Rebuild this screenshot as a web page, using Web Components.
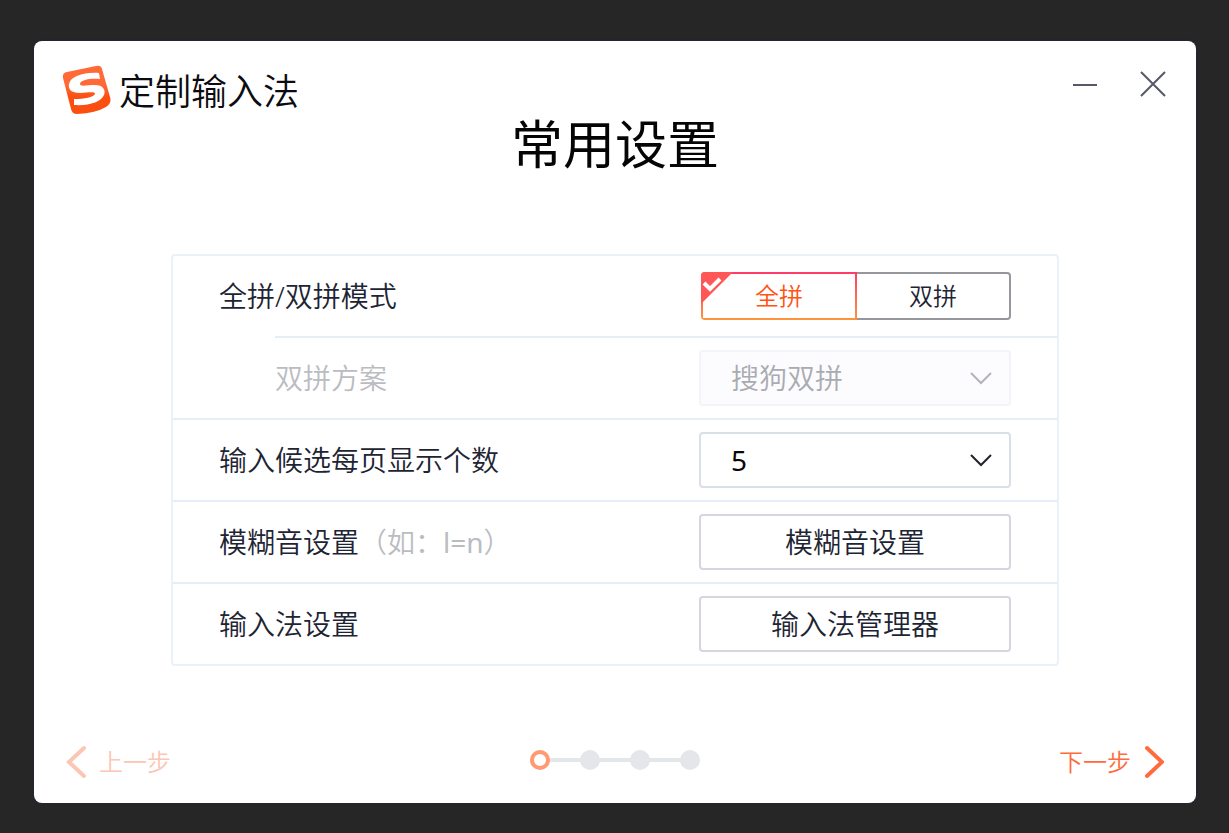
<!DOCTYPE html>
<html lang="zh-CN">
<head>
<meta charset="utf-8">
<meta name="viewport" content="width=device-width, initial-scale=1">
<title>定制输入法</title>
<style>
  * { box-sizing: border-box; }
  body {
    margin: 0;
    min-height: 100vh;
    display: flex;
    padding: 41px 33px 30px 34px;
    background: #262626;
    color: #1d2433;
    font-family: "Noto Sans", "Noto Sans CJK SC", sans-serif;
    font-weight: 350;
  }
</style>
</head>
<body>
<wizard-window>
  <title-bar slot="bar">定制输入法</title-bar>
  <span slot="heading">常用设置</span>
  <settings-panel></settings-panel>
  <step-nav slot="nav" total="4" current="1"></step-nav>
</wizard-window>

<script>
class BaseElement extends HTMLElement {
  connectedCallback() {
    if (this.shadowRoot) return;
    this.attachShadow({ mode: "open" }).innerHTML =
      "<style>*{box-sizing:border-box}button{font:inherit;color:inherit;background:none;border:0;padding:0;margin:0;cursor:pointer}svg{display:block}</style>" + this.render();
  }
}

customElements.define("wizard-window", class extends BaseElement {
  render() {
    return `
    <style>
      :host { flex: 1; display: flex; flex-direction: column; background: #fff; border-radius: 8px; box-shadow: 0 0 3px #1d2a40; }
      h1 { margin: 0; text-align: center; font-size: 52px; line-height: 62px; font-weight: 400; color: #050505; }
      main { flex: 1; width: 100%; max-width: 888px; margin: 0 auto; padding-top: 79px; }
    </style>
    <slot name="bar"></slot>
    <h1><slot name="heading"></slot></h1>
    <main><slot></slot></main>
    <slot name="nav"></slot>`;
  }
});

customElements.define("title-bar", class extends BaseElement {
  render() {
    return `
    <style>
      :host { display: flex; align-items: flex-start; justify-content: space-between; height: 72px; padding: 24px 26px 0 28px; }
      .brand { display: flex; align-items: flex-start; gap: 8px; font-size: 36px; line-height: 54px; color: #0c0c10; }
      .actions { display: flex; gap: 32px; }
      .actions button { width: 36px; height: 36px; }
    </style>
    <div class="brand">
      <svg width="49" height="50" viewBox="0 0 49 50" aria-hidden="true">
        <defs><linearGradient id="g" x1="0" y1="0" x2="0" y2="1"><stop offset=".4" stop-color="#ff6a36"/><stop offset=".65" stop-color="#fa4f10"/></linearGradient></defs>
        <path fill="url(#g)" d="M5 7 L34 1 Q39 0 40 4 L48 32 Q50 38 44 42 Q34 48 15 49 Q10 49 9 44 L1 13 Q0 8 5 7Z"/>
        <path fill="#fff" d="M37 8 L38 14 C28 13 18 15 18 19 C18 22 25 20 33 20 C41 20 44 25 42 30 C39 37 27 41 12 40 L12 34 C22 34 32 32 33 29 C33 26 25 28 18 28 C9 28 6 24 7 19 C9 11 22 7 37 8Z"/>
      </svg>
      <span><slot></slot></span>
    </div>
    <div class="actions">
      <button type="button" aria-label="最小化"><svg width="36" height="36" aria-hidden="true"><path d="M7 20H31" stroke="#555865" stroke-width="2"/></svg></button>
      <button type="button" aria-label="关闭"><svg width="36" height="36" aria-hidden="true"><path d="M7 7L31 31M31 7L7 31" stroke="#555865" stroke-width="2"/></svg></button>
    </div>`;
  }
});

customElements.define("setting-row", class extends BaseElement {
  render() {
    return `
    <style>
      :host { display: flex; align-items: center; justify-content: space-between; height: 82px; padding: 0 46px; border-top: 2px solid #e6edf6; }
      :host([first]) { height: 80px; border-top: 0; }
      :host([sub]) { margin-left: 102px; padding-left: 0; color: #babcc2; }
    </style>
    <slot name="label"></slot>
    <slot></slot>`;
  }
});

customElements.define("settings-panel", class extends BaseElement {
  render() {
    const chevron = `<svg width="22" height="14" viewBox="0 0 22 14" aria-hidden="true"><path d="M1 2L11 12L21 2" fill="none" stroke="currentColor" stroke-width="2"/></svg>`;
    return `
    <style>
      :host { display: block; border: 2px solid #ebf1f8; border-radius: 4px; font-size: 28px; line-height: 40px; }
      .hint { color: #babcc2; }
      .hint b { font-weight: 400; }
      .control { width: 312px; height: 56px; border: 2px solid #d5d7de; border-radius: 4px; }
      .select { display: grid; align-items: center; border-color: #dae0e8; color: #22242c; }
      .select > * { grid-area: 1 / 1; }
      .select svg { justify-self: end; margin-right: 17px; pointer-events: none; }
      select { appearance: none; width: 100%; height: 52px; padding: 0 30px; border: 0; background: none; font: inherit; font-weight: 400; color: #08080a; opacity: 1; }
      .select.off { background: #fcfcfe; border-color: #f3f4f9; color: #b2b4ba; }
      .select.off select { font-weight: 350; color: #a9abb1; }
      fieldset { display: flex; width: 310px; height: 48px; margin: 0; padding: 0; border: 0; font-size: 24px; }
      fieldset label { position: relative; flex: 1; display: flex; align-items: center; justify-content: center; border: 2px solid #96979d; border-left: 0; border-radius: 0 4px 4px 0; }
      fieldset label.on { flex: 0 0 156px; color: #ff5313; border: 0; border-radius: 4px 0 0 4px;
        background: linear-gradient(#fff, #fff) 2px 2px / calc(100% - 4px) calc(100% - 4px) no-repeat, linear-gradient(#ff3a69, #ff943a); }
      input { appearance: none; position: absolute; inset: 0; margin: 0; cursor: pointer; }
      .tick { position: absolute; left: 0; top: 0; }
    </style>
    <setting-row first>
      <span slot="label" id="mode">全拼/双拼模式</span>
      <fieldset aria-labelledby="mode">
        <label class="on"><input type="radio" name="mode" checked>
          <svg class="tick" width="32" height="32" viewBox="0 0 32 32" aria-hidden="true">
            <path d="M4 0H32L0 32V4Q0 0 4 0Z" fill="#ff5658"/><path d="M3 11L9 17L19 7" fill="none" stroke="#fff" stroke-width="4"/></svg>
          <span>全拼</span></label>
        <label><input type="radio" name="mode"><span>双拼</span></label>
      </fieldset>
    </setting-row>
    <setting-row sub>
      <label slot="label" for="scheme">双拼方案</label>
      <div class="control select off"><select id="scheme" disabled><option>搜狗双拼</option></select>${chevron}</div>
    </setting-row>
    <setting-row>
      <label slot="label" for="count">输入候选每页显示个数</label>
      <div class="control select"><select id="count"><option>5</option></select>${chevron}</div>
    </setting-row>
    <setting-row>
      <span slot="label">模糊音设置<span class="hint">（如：<b>l=n</b>）</span></span>
      <button type="button" class="control">模糊音设置</button>
    </setting-row>
    <setting-row>
      <span slot="label">输入法设置</span>
      <button type="button" class="control">输入法管理器</button>
    </setting-row>`;
  }
});

customElements.define("step-nav", class extends BaseElement {
  render() {
    const total = Number(this.getAttribute("total"));
    const current = Number(this.getAttribute("current"));
    let dots = "";
    for (let i = 1; i <= total; i++) dots += `<li${i === current ? ' class="on" aria-current="step"' : ""}></li>`;
    return `
    <style>
      :host { display: grid; grid-template-columns: 1fr auto 1fr; align-items: center; padding: 0 32px 20px; font-size: 24px; line-height: 36px; }
      button { display: flex; align-items: center; gap: 13px; height: 42px; color: #ff6b3d; }
      .next { justify-self: end; }
      button:disabled { color: #fcc6b4; cursor: default; }
      ol { display: flex; gap: 30px; margin: 0; padding: 0 0 4px; list-style: none;
        background: linear-gradient(#e4e7ea, #e4e7ea) 10px 8px / calc(100% - 20px) 4px no-repeat; }
      li { width: 20px; height: 20px; border-radius: 50%; background: #e4e6ea; }
      .on { background: #fff; border: 4px solid #ff9a73; }
    </style>
    <button type="button" disabled>
      <svg width="20" height="34" viewBox="0 0 20 34" aria-hidden="true"><path d="M18 3L3 17L18 31" fill="none" stroke="currentColor" stroke-width="4" stroke-linecap="round"/></svg>
      <span>上一步</span></button>
    <ol>${dots}</ol>
    <button type="button" class="next"><span>下一步</span>
      <svg width="20" height="34" viewBox="0 0 20 34" aria-hidden="true"><path d="M3 3L18 17L3 31" fill="none" stroke="currentColor" stroke-width="4" stroke-linecap="round"/></svg></button>`;
  }
});
</script>
</body>
</html>
